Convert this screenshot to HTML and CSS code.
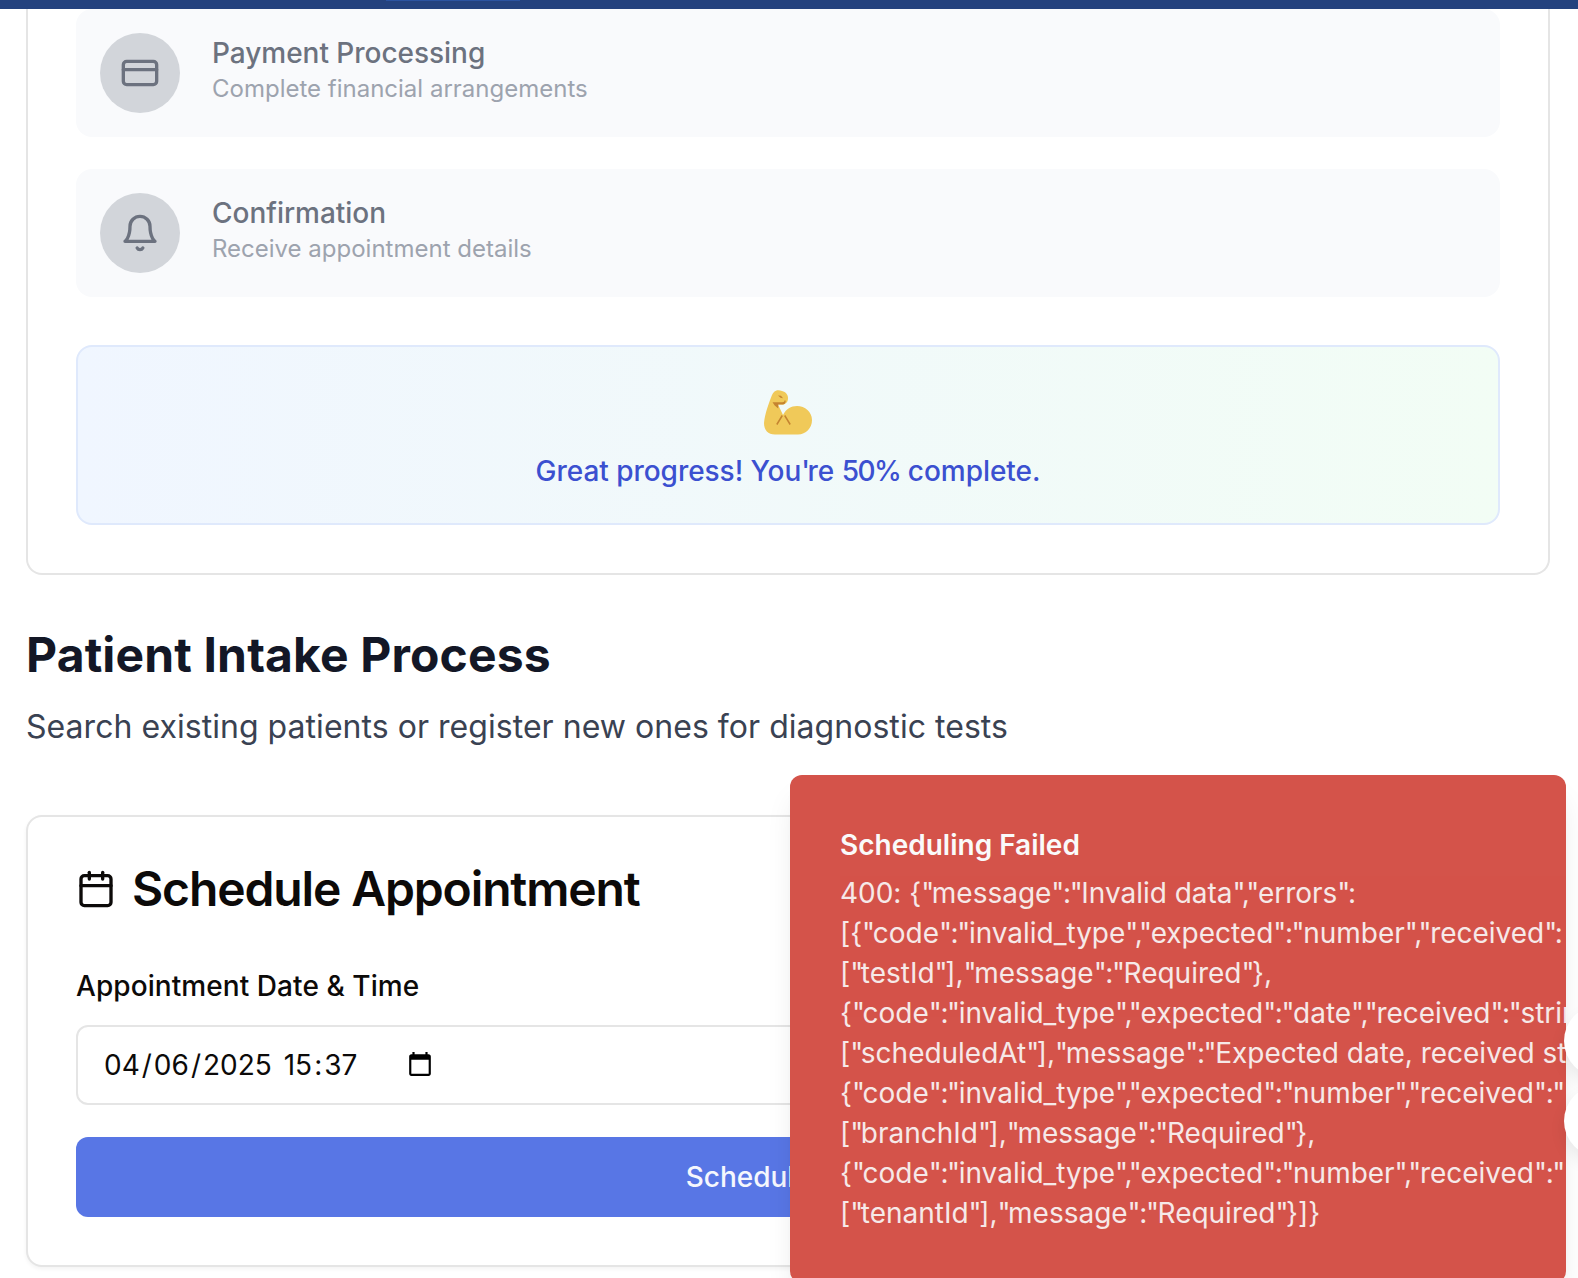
FILE: index.html
```html
<!DOCTYPE html>
<html lang="en">
<head>
<meta charset="utf-8">
<title>Patient Intake</title>
<link rel="stylesheet" href="styles.css">
</head>
<body>
<header class="navbar"><span class="nav-active"></span></header>
<main class="page">
  <section class="card progress-card">
    <div class="step">
      <div class="step-icon">
        <svg class="icon" viewBox="0 0 24 24"><rect width="20" height="14" x="2" y="5" rx="2"/><path d="M2 10h20"/></svg>
      </div>
      <div>
        <div class="step-title">Payment Processing</div>
        <div class="step-text">Complete financial arrangements</div>
      </div>
    </div>
    <div class="step">
      <div class="step-icon">
        <svg class="icon" viewBox="0 0 24 24"><path d="M6 8a6 6 0 0 1 12 0c0 7 3 9 3 9H3s3-2 3-9"/><path d="M10.3 21a1.94 1.94 0 0 0 3.4 0"/></svg>
      </div>
      <div>
        <div class="step-title">Confirmation</div>
        <div class="step-text">Receive appointment details</div>
      </div>
    </div>
    <div class="cheer">
      <div class="cheer-emoji">
        <svg class="biceps" viewBox="0 0 48 45">
          <path fill="#f0c959" d="M10 2C12 0 15 0 18 1c4 1 6 4 6 7 0 4-2 6-5 6.500h-5L19 25c3-6 8-9 14-9 8 0 15 6 15 14s-6 14.500-14 14.500H11C4 44.500 0 40 0 33 1 23 5 13 8 5 8.500 4 9 3 10 2z"/>
          <path fill="#c58430" d="M8.500 12.300h10c1.500 0 2-1 2.200-2l1 .4c0 2-1 3.800-3 3.800h-4.500v4l-3.500-3z"/>
          <path fill="#c58430" d="M14 5.500l3 .3 2 2.400-2.500-.4z"/>
          <path fill="none" stroke="#c58430" stroke-width="1.500" d="M18.300 25.500l-5.500 9M20.700 25.500l5.500 9"/>
        </svg>
      </div>
      <div class="cheer-text">Great progress! You<b>'</b>re <span class="percent">50%</span> complete.</div>
    </div>
  </section>

  <h1 class="page-title">Patient Intake Process</h1>
  <p class="page-lead">Search existing patients or register new ones for diagnostic tests</p>

  <section class="card schedule-card">
    <h2 class="card-title">
      <svg class="icon" viewBox="0 0 24 24"><path d="M8 2v4"/><path d="M16 2v4"/><rect width="18" height="18" x="3" y="4" rx="2"/><path d="M3 10h18"/></svg>
      Schedule Appointment
    </h2>
    <div class="field"><label class="field-label">Appointment Date &amp; Time</label></div>
    <div class="date-input">
      <span class="date-edit"><span class="part">04</span>/<span class="part">06</span>/<span class="part">2025</span>&nbsp;<span class="part">15</span>:<span class="part">37</span></span>
      <svg class="picker" viewBox="0 0 24 24"><path d="M20 3h-1V1h-2v2H7V1H5v2H4c-1.100 0-2 .9-2 2v16c0 1.100.9 2 2 2h16c1.100 0 2-.9 2-2V5c0-1.100-.9-2-2-2zm0 18H4V8h16v13z"/></svg>
    </div>
    <button class="submit">Schedule Tests</button>
  </section>
</main>

<div class="toast">
  <div class="toast-title">Scheduling Failed</div>
  <div class="toast-text">400: {<b>"</b>message<i>":"</i>Invalid data<i>","</i>errors<b>"</b>:<br>[{<b>"</b>code<i>":"</i>invalid_type<i>","</i>expected<i>":"</i>number<i>","</i>received<b>"</b>:<br>[<b>"</b>testId<b>"</b>],<b>"</b>message<i>":"</i>Required<b>"</b>},<br>{<b>"</b>code<i>":"</i>invalid_type<i>","</i>expected<i>":"</i>date<i>","</i>received<i>":"</i>string<br>[<b>"</b>scheduledAt<b>"</b>],<b>"</b>message<i>":"</i>Expected date, received string<br>{<b>"</b>code<i>":"</i>invalid_type<i>","</i>expected<i>":"</i>number<i>","</i>received<i>":"</i><br>[<b>"</b>branchId<b>"</b>],<b>"</b>message<i>":"</i>Required<b>"</b>},<br>{<b>"</b>code<i>":"</i>invalid_type<i>","</i>expected<i>":"</i>number<i>","</i>received<i>":"</i><br>[<b>"</b>tenantId<b>"</b>],<b>"</b>message<i>":"</i>Required<b>"</b>}]}</div>
</div>
<div class="fabs"><span class="fab"></span><span class="fab"></span></div>
</body>
</html>
```
FILE: styles.css
```css
* { box-sizing: border-box; }
html { overflow: hidden; }
body {
  margin: 0;
  height: 1278px;
  overflow: hidden;
  position: relative;
  background: #fff;
  color: #0c0a09;
  font: 32px/48px Inter, "Liberation Sans", sans-serif;
}
/* tightened straight quotes: b for a single mark, i for a quote-separator-quote run */
b, i { font-weight: inherit; font-style: normal; }
b { letter-spacing: -2.4px; }
i { letter-spacing: -1.4px; }
.navbar { height: 9px; background: #24427e; }
.nav-active {
  display: block;
  width: 134px;
  height: 1px;
  margin-left: 386px;
  background: #2b53a0;
}
.page { padding: 0 28px 0 26px; }
.card { border: 2px solid #e5e5e5; border-radius: 16px; background: #fff; padding: 48px; }
.progress-card {
  border-top: 0;
  border-radius: 0 0 16px 16px;
  padding-top: 0;
}
.icon {
  width: 40px;
  height: 40px;
  flex: none;
  fill: none;
  stroke: currentColor;
  stroke-width: 2;
  stroke-linecap: round;
  stroke-linejoin: round;
}
.step {
  display: flex;
  gap: 32px;
  height: 128px;
  padding: 24px;
  margin-bottom: 32px;
  border-radius: 16px;
  background: #f9fafc;
}
.step-icon {
  display: flex;
  align-items: center;
  justify-content: center;
  width: 80px;
  height: 80px;
  border-radius: 50%;
  background: #d2d5da;
  color: #6c727f;
}
.step-title { font-size: 28px; line-height: 40px; font-weight: 500; color: #6c727f; letter-spacing: -.03px; }
.step-text { font-size: 24px; line-height: 32px; color: #9da3ae; }
.cheer {
  margin-top: 48px;
  padding: 32px;
  border: 2px solid #dfe9fc;
  border-radius: 16px;
  background: linear-gradient(to right, #f0f6ff, #f2fdf5);
  text-align: center;
}
.cheer-emoji { display: flex; justify-content: center; height: 64px; margin-bottom: 8px; padding-top: 11px; }
.biceps { width: 48px; height: 45px; }
.cheer-text { font-size: 28px; line-height: 40px; font-weight: 500; color: #3b50d0; letter-spacing: -.04px; }
.percent { letter-spacing: -1.5px; }
.page-title { margin: 48px 0 0; font-size: 48px; line-height: 64px; font-weight: 700; color: #131726; letter-spacing: .14px; }
.page-lead { margin: 16px 0 64px; color: #3a4252; letter-spacing: .04px; }
.schedule-card { box-shadow: 0 2px 4px rgba(0, 0, 0, .05); }
.card-title {
  display: flex;
  align-items: center;
  gap: 16px;
  margin: 0 0 48px;
  font-size: 48px;
  line-height: 48px;
  font-weight: 600;
  letter-spacing: -1.13px;
}
.field { margin-bottom: 16px; }
.field-label { font-size: 28px; line-height: 28px; font-weight: 500; letter-spacing: .07px; }
.date-input {
  display: flex;
  align-items: center;
  height: 80px;
  margin-bottom: 32px;
  padding: 0 24px;
  border: 2px solid #e5e5e5;
  border-radius: 12px;
  font-size: 28px;
  line-height: 40px;
}
.date-edit { width: 305px; white-space: nowrap; }
.part { padding: 0 2px; }
.picker { width: 26px; height: 26px; margin-bottom: 2px; fill: #000; }
.submit {
  display: block;
  width: 100%;
  height: 80px;
  border: 0;
  border-radius: 12px;
  background: #5876e5;
  color: #f5f7fd;
  font: 500 28px/40px Inter, "Liberation Sans", sans-serif;
}
.toast {
  position: absolute;
  left: 790px;
  top: 775px;
  width: 776px;
  height: 508px;
  padding: 50px;
  overflow: hidden;
  border-radius: 12px;
  background: #d4534a;
  color: #fafafa;
  box-shadow: 0 20px 30px -6px rgba(0, 0, 0, .1), 0 8px 12px -8px rgba(0, 0, 0, .1);
  font-size: 28px;
  line-height: 40px;
  white-space: nowrap;
}
.toast-title { font-weight: 600; margin-bottom: 8px; }
.toast-text { opacity: .9; letter-spacing: -.02px; }
.fabs {
  position: absolute;
  left: 1564px;
  top: 1005px;
  display: flex;
  flex-direction: column;
  gap: 8px;
}
.fab { width: 72px; height: 72px; border-radius: 50%; background: #fff; box-shadow: 0 8px 16px rgba(0, 0, 0, .08); }
```
